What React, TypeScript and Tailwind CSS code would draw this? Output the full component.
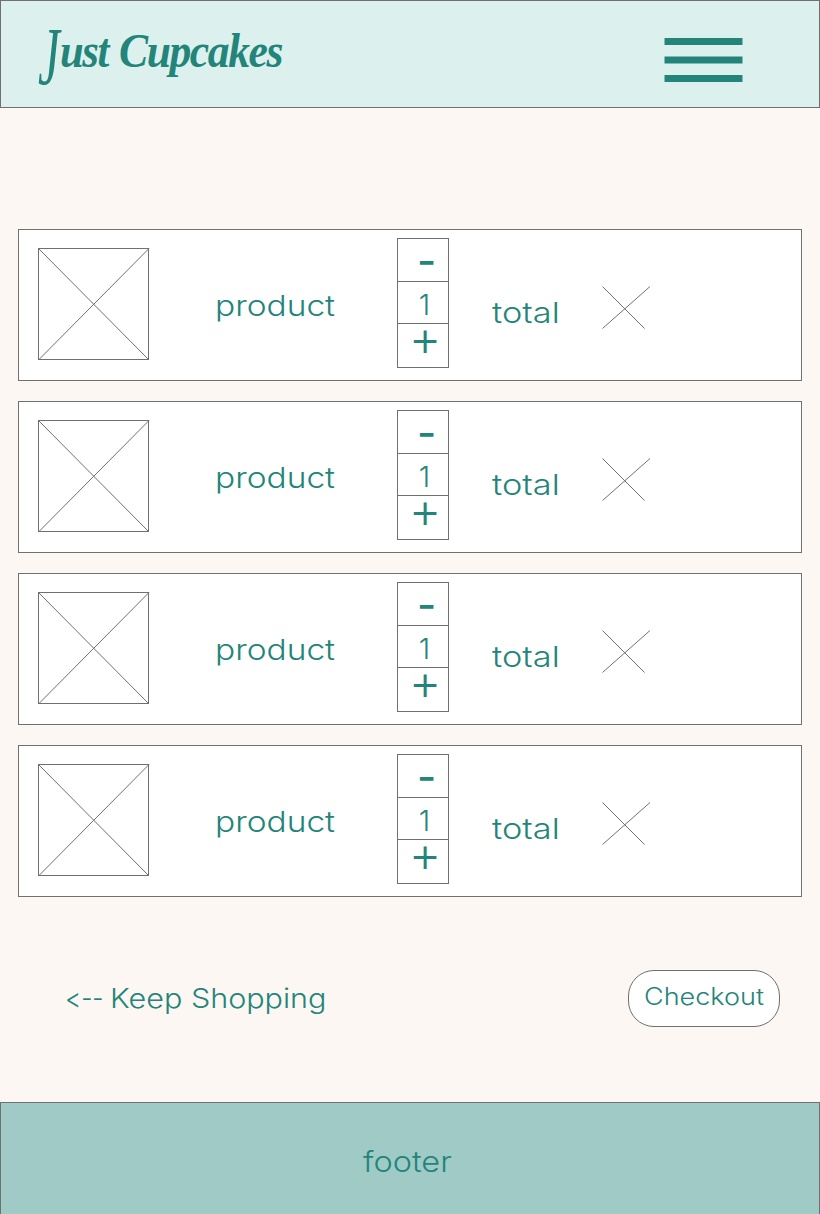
import React from "react";

const rows = [1, 2, 3, 4];

function Logo() {
  return (
    <h1
      aria-label="Just Cupcakes"
      className="ml-[37px] mt-[20px] flex whitespace-nowrap font-['Liberation_Serif',serif] text-[49px] font-bold italic leading-[60px] tracking-[-1.6px]"
    >
      <span className="block w-[22px] origin-[0_15px] -translate-y-[5px] scale-y-[1.7] font-normal">J</span>
      <span className="block w-[59px] origin-left scale-x-[0.87]">ust</span>
      <span className="block w-max origin-left scale-x-[0.89]">Cupcakes</span>
    </h1>
  );
}

function MenuButton() {
  return (
    <button aria-label="Menu" className="mr-[76px] mt-[37px] h-[44px] w-[79px]">
      <svg width="79" height="44" viewBox="0 0 79 44" className="block" fill="#23857a">
        <rect x="0.5" y="0" width="78" height="7" />
        <rect x="0.5" y="18.5" width="78" height="7" />
        <rect x="0.5" y="37" width="78" height="7" />
      </svg>
    </button>
  );
}

function Thumbnail() {
  return (
    <svg width="112" height="113" viewBox="0 0 112 113" className="ml-[19px] mt-[18px] block shrink-0" fill="none" stroke="#707070">
      <rect x="0.5" y="0.5" width="110" height="111" />
      <path d="M0.5 0.5L111 112M111 0.5L0.5 112" />
    </svg>
  );
}

function Stepper() {
  return (
    <div className="ml-[62px] mt-[8px] flex h-[130px] w-[52px] shrink-0 flex-col border border-[#707070]">
      <button className="h-[43px] border-b border-[#707070] pl-[7px] text-center text-[40px] font-medium leading-[44px]">
        <span className="block h-[42px] scale-x-[1.04]">-</span>
      </button>
      <div className="h-[42px] border-b border-[#707070] pl-[3px] text-center text-[29px] font-[350] leading-[45px]">1</div>
      <button className="h-[43px] pl-[4px] text-center font-['DejaVu_Sans',sans-serif] text-[36px] leading-[33px]">
        <span className="block h-[43px]">+</span>
      </button>
    </div>
  );
}

function CartRow() {
  return (
    <li className="flex h-[152px] items-start border border-[#707070] bg-white">
      <Thumbnail />
      <div className="ml-[65px] mt-[56px] w-[120px] text-[29px] font-[350] leading-[40px]">
        <span className="block w-max origin-left scale-x-[1.155]">product</span>
      </div>
      <Stepper />
      <div className="ml-[43px] mt-[63px] w-[68px] text-[29px] font-[350] leading-[40px]">
        <span className="block w-max origin-left scale-x-[1.185]">total</span>
      </div>
      <button aria-label="Remove" className="ml-[42px] mt-[56px]">
        <svg width="50" height="44" viewBox="0 0 50 44" className="block" fill="none" stroke="#707070">
          <path d="M0.5 0.5L42.5 42.5M48 0.5L0.5 42.5" />
        </svg>
      </button>
    </li>
  );
}

export default function App() {
  return (
    <div className="flex h-[1214px] w-[820px] flex-col overflow-hidden bg-[#fcf7f3] font-['Inter',sans-serif] text-[#23857a]">
      <header className="flex h-[108px] shrink-0 items-start justify-between border border-[#707070] bg-[#dcf1ee]">
        <Logo />
        <MenuButton />
      </header>
      <main className="flex-1 px-[18px] pt-[121px]">
        <ul className="flex flex-col gap-5">
          {rows.map((id) => (
            <CartRow key={id} />
          ))}
        </ul>
        <div className="mt-[73px] flex items-start justify-between pl-[47px] pr-[22px]">
          <a className="mt-[8px] flex text-[27.5px] font-[350] leading-[40px]">
            <span className="block w-[45px]">
              <span className="block w-max origin-left scale-x-[0.9] [font-feature-settings:'calt'_0]">&lt;--</span>
            </span>
            <span className="block w-max origin-left scale-x-[1.11]">Keep Shopping</span>
          </a>
          <button className="h-[57px] w-[152px] rounded-[26px] border border-[#707070] bg-white pb-[4px] pl-[15px] text-left text-[23.5px] font-[350]">
            <span className="block w-max origin-left scale-x-[1.15]">Checkout</span>
          </button>
        </div>
      </main>
      <footer className="h-[112px] shrink-0 border border-b-0 border-[#707070] bg-[#a0cac6] pl-[362px] pt-[39px] text-[29px] font-[350] leading-[40px]">
        <span className="block w-max origin-left scale-x-[1.12]">footer</span>
      </footer>
    </div>
  );
}
